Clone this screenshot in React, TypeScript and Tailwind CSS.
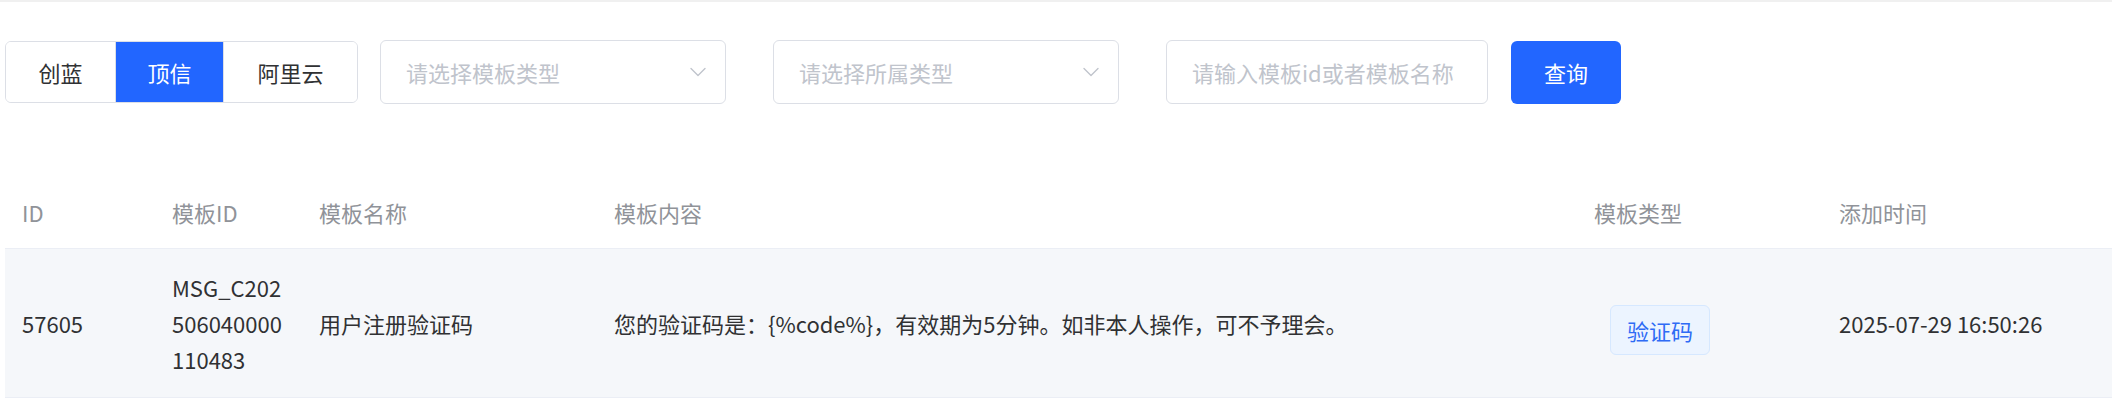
import { useState } from "react";

interface TemplateRow {
    id: string;
    templateId: string;
    name: string;
    content: string;
    type: string;
    createdAt: string;
}

const rows: TemplateRow[] = [
    {
        id: "57605",
        templateId: "MSG_C202506040000110483",
        name: "用户注册验证码",
        content: "您的验证码是：{%code%}，有效期为5分钟。如非本人操作，可不予理会。",
        type: "验证码",
        createdAt: "2025-07-29 16:50:26",
    },
];

const providers = [
    { key: "chuanglan", label: "创蓝", width: "w-[109px]" },
    { key: "dingxin", label: "顶信", width: "w-[108px]" },
    { key: "aliyun", label: "阿里云", width: "w-[134px]" },
];

function Chevron() {
    return (
        <svg width="16" height="10" viewBox="0 0 16 10" fill="none" className="shrink-0">
            <path d="M1 1.5 L8 8.5 L15 1.5" stroke="#c0c4cc" strokeWidth="1.4" strokeLinecap="round" strokeLinejoin="round" />
        </svg>
    );
}

export default function App() {
    const [provider, setProvider] = useState("dingxin");

    const cols = "grid grid-cols-[150px_147px_295px_980px_245px_1fr]";

    return (
        <div className="min-h-screen w-full bg-white text-[22px] text-[#303133] font-['Noto_Sans_CJK_SC','Noto_Sans',sans-serif]">
            <div className="h-[2px] bg-[#f0f0f0]" />

            {/* Filter bar */}
            <div className="mt-[38px] flex h-[64px] items-center pl-[5px]">
                <div className="flex h-[62px] overflow-hidden rounded-[6px] border border-[#dcdfe6]">
                    {providers.map((p, idx) => (
                        <button
                            key={p.key}
                            onClick={() => setProvider(p.key)}
                            className={`${p.width} flex h-full items-center justify-center ${idx > 0 ? "border-l border-[#dcdfe6]" : ""} ${provider === p.key ? "border-[#2266ff] bg-[#2266ff] text-white" : "bg-white text-[#303133]"}`}
                        >
                            {p.label}
                        </button>
                    ))}
                </div>

                <div className="ml-[22px] flex h-[64px] w-[346px] items-center justify-between rounded-[6px] border border-[#dcdfe6] pl-[25px] pr-[19px] text-[#c0c4cc]">
                    <span>请选择模板类型</span>
                    <Chevron />
                </div>

                <div className="ml-[47px] flex h-[64px] w-[346px] items-center justify-between rounded-[6px] border border-[#dcdfe6] pl-[25px] pr-[19px] text-[#c0c4cc]">
                    <span>请选择所属类型</span>
                    <Chevron />
                </div>

                <div className="ml-[47px] flex h-[64px] w-[322px] items-center rounded-[6px] border border-[#dcdfe6] pl-[25px] text-[#c0c4cc]">
                    <span>请输入模板id或者模板名称</span>
                </div>

                <button className="ml-[23px] flex h-[63px] w-[110px] items-center justify-center rounded-[6px] bg-[#2266ff] text-white">
                    查询
                </button>
            </div>

            {/* Table */}
            <div className="ml-[5px] mt-[73px]">
                <div className={`${cols} h-[72px] items-center border-b border-[#ebeef5] text-[#909399]`}>
                    <div className="px-[17px]">ID</div>
                    <div className="px-[17px]">模板ID</div>
                    <div className="px-[17px]">模板名称</div>
                    <div className="px-[17px]">模板内容</div>
                    <div className="px-[17px]">模板类型</div>
                    <div className="px-[17px]">添加时间</div>
                </div>

                {rows.map((row) => (
                    <div key={row.id} className={`${cols} items-center border-b border-[#ebeef5] bg-[#f5f7fa] py-[20px] leading-[36px]`}>
                        <div className="px-[17px]">{row.id}</div>
                        <div className="px-[17px] break-all">{row.templateId}</div>
                        <div className="px-[17px]">{row.name}</div>
                        <div className="px-[17px]">{row.content}</div>
                        <div className="px-[17px]">
                            <span className="ml-[16px] mt-[14px] inline-flex h-[50px] items-center rounded-[6px] border border-[#d6e8ff] bg-[#ecf4ff] px-[16px] text-[#2f6bf5]">
                                {row.type}
                            </span>
                        </div>
                        <div className="px-[17px]">{row.createdAt}</div>
                    </div>
                ))}
            </div>
        </div>
    );
}
